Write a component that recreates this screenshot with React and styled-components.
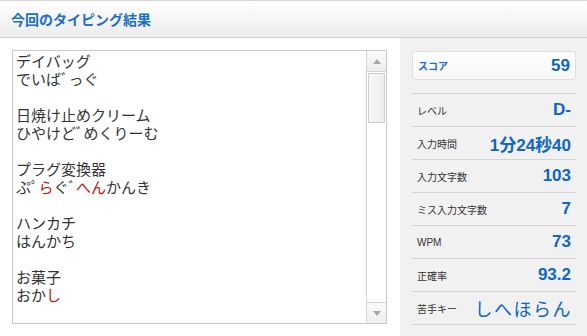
import styled, { createGlobalStyle } from "styled-components"

const GlobalStyle = createGlobalStyle`
  html, body {
    margin: 0;
    padding: 0;
    background: #fff;
  }
  body {
    width: 587px;
    height: 336px;
    overflow: hidden;
    font-family: "Liberation Sans", "Noto Sans CJK JP", sans-serif;
  }
`

const words = [
  { kanji: "デイバッグ", kana: [["でいば\uFF9Eっぐ"]] },
  { kanji: "日焼け止めクリーム", kana: [["ひやけど\uFF9Eめくりーむ"]] },
  {
    kanji: "プラグ変換器",
    kana: [["ぷ\uFF9F"], ["ら", true], ["ぐ\uFF9E"], ["へん", true], ["かんき"]],
  },
  { kanji: "ハンカチ", kana: [["はんかち"]] },
  { kanji: "お菓子", kana: [["おか"], ["し", true]] },
]

const stats = [
  { label: "レベル", value: "D-" },
  { label: "入力時間", value: "1分24秒40" },
  { label: "入力文字数", value: "103" },
  { label: "ミス入力文字数", value: "7" },
  { label: "WPM", value: "73" },
  { label: "正確率", value: "93.2" },
  { label: "苦手キー", value: "しへほらん", keys: true },
]

export default function App() {
  return (
    <Page>
      <GlobalStyle />
      <Header>
        <Title>今回のタイピング結果</Title>
      </Header>
      <Body>
        <LeftPane>
          <Box>
            <Content>
              {words.map((w, i) => (
                <Word key={i}>
                  <Line>{w.kanji}</Line>
                  <Line>
                    {w.kana.map(([t, miss], j) =>
                      miss ? <Miss key={j}>{t}</Miss> : <span key={j}>{t}</span>
                    )}
                  </Line>
                </Word>
              ))}
            </Content>
            <ScrollBar>
              <Arrow>
                <svg width="8" height="5" viewBox="0 0 8 5">
                  <path d="M0 5 L4 0 L8 5 Z" fill="#a8a8a8" />
                </svg>
              </Arrow>
              <Track>
                <Thumb />
              </Track>
              <Arrow down>
                <svg width="8" height="5" viewBox="0 0 8 5">
                  <path d="M0 0 L4 5 L8 0 Z" fill="#a8a8a8" />
                </svg>
              </Arrow>
            </ScrollBar>
          </Box>
        </LeftPane>
        <Side>
          <ScoreBox>
            <ScoreLabel>スコア</ScoreLabel>
            <Value>59</Value>
          </ScoreBox>
          <StatList>
            {stats.map((s) => (
              <StatRow key={s.label}>
                <Label>{s.label}</Label>
                {s.keys ? <Keys>{s.value}</Keys> : <Value>{s.value}</Value>}
              </StatRow>
            ))}
          </StatList>
        </Side>
      </Body>
    </Page>
  )
}

const Page = styled.div`
  width: 587px;
  height: 336px;
  display: flex;
  flex-direction: column;
`

const Header = styled.div`
  height: 36px;
  border-top: 1px solid #d6d6d6;
  border-bottom: 1px solid #cfcfcf;
  background: linear-gradient(#ffffff, #ececec);
  display: flex;
  align-items: center;
  padding-left: 11px;
`

const Title = styled.h1`
  margin: 0;
  font-family: "Noto Sans CJK JP", sans-serif;
  font-size: 14px;
  font-weight: 700;
  color: #1b6fca;
`

const Body = styled.div`
  flex: 1;
  display: flex;
  min-height: 0;
`

const LeftPane = styled.div`
  width: 400px;
  padding: 12px 13px 0 12px;
  box-sizing: border-box;
  background: #fff;
`

const Box = styled.div`
  height: 274px;
  border: 1px solid #c8c8c8;
  display: flex;
  box-sizing: border-box;
`

const Content = styled.div`
  flex: 1;
  overflow: hidden;
  padding: 1px 0 0 3px;
  font-family: "Noto Sans CJK JP", sans-serif;
  font-size: 15px;
  font-weight: 400;
  line-height: 18px;
  color: #333;
`

const Word = styled.div`
  margin-bottom: 18px;
`

const Line = styled.div`
  white-space: nowrap;
`

const Miss = styled.span`
  color: #c80c0c;
`

const ScrollBar = styled.div`
  width: 19px;
  border-left: 1px solid #d4d4d4;
  display: flex;
  flex-direction: column;
  background: #fff;
`

const Arrow = styled.div`
  height: 20px;
  display: flex;
  align-items: center;
  justify-content: center;
  background: linear-gradient(#fbfbfb, #eeeeee);
  border-bottom: ${(p) => (p.down ? "none" : "1px solid #d4d4d4")};
  border-top: ${(p) => (p.down ? "1px solid #d4d4d4" : "none")};
`

const Track = styled.div`
  flex: 1;
  padding: 1px 1px 0 1px;
`

const Thumb = styled.div`
  height: 48px;
  border: 1px solid #d0d0d0;
  background: linear-gradient(90deg, #f8f8f8, #ececec);
`

const Side = styled.div`
  flex: 1;
  background: #f1f1f1;
  padding: 13px 11px 0 12px;
`

const ScoreBox = styled.div`
  height: 27px;
  border: 1px solid #dedede;
  border-radius: 3px;
  background: linear-gradient(#ffffff, #f7f7f7);
  display: flex;
  align-items: center;
  justify-content: space-between;
  padding: 0 5px 0 5px;
  margin-bottom: 13px;
`

const ScoreLabel = styled.span`
  font-family: "Noto Sans CJK JP", sans-serif;
  font-size: 10px;
  font-weight: 700;
  color: #1b6fca;
`

const StatList = styled.div`
  border-top: 1px solid #d2d2d2;
`

const StatRow = styled.div`
  height: 32px;
  border-bottom: 1px solid #d2d2d2;
  display: flex;
  align-items: center;
  justify-content: space-between;
  padding: 0 5px 0 5px;
`

const Label = styled.span`
  font-family: "Liberation Sans", "Noto Sans CJK JP", sans-serif;
  font-size: 10px;
  color: #333;
`

const Value = styled.span`
  font-family: "Liberation Sans", "Noto Sans CJK JP", sans-serif;
  font-size: 17px;
  font-weight: 700;
  color: #0d66c8;
  white-space: nowrap;
`

const Keys = styled.span`
  font-family: "Noto Sans CJK JP", sans-serif;
  font-size: 18px;
  color: #0d66c8;
  letter-spacing: 1.5px;
  margin-right: -1px;
`
